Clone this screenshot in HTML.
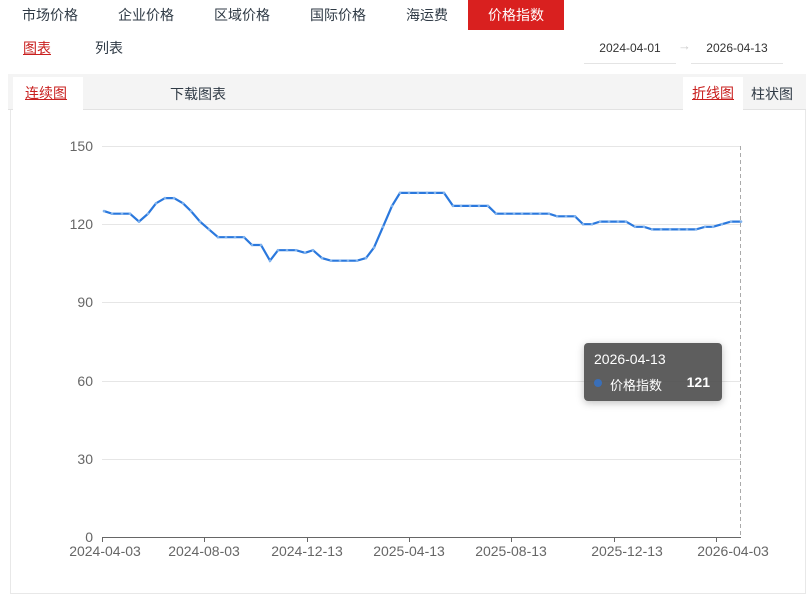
<!DOCTYPE html>
<html><head><meta charset="utf-8"><style>
*{margin:0;padding:0;box-sizing:border-box}
body{width:811px;height:586px;background:#fff;font-family:"Liberation Sans","Noto Sans CJK SC",sans-serif;position:relative;overflow:hidden;color:#333}
.tab{position:absolute;top:0;height:30px;line-height:30px;font-size:14px;color:#2f3a45;text-align:center}
.abs{position:absolute}
</style></head><body>
<div class="tab" style="left:8px;width:84px">市场价格</div>
<div class="tab" style="left:104px;width:84px">企业价格</div>
<div class="tab" style="left:200px;width:84px">区域价格</div>
<div class="tab" style="left:296px;width:84px">国际价格</div>
<div class="tab" style="left:385px;width:84px">海运费</div>
<div class="tab" style="left:468px;width:96px;background:#d9201f;color:#fff">价格指数</div>
<div class="abs" style="left:23px;top:38px;font-size:14px;color:#c9201f;text-decoration:underline">图表</div>
<div class="abs" style="left:95px;top:38px;font-size:14px;color:#2f3a45">列表</div>
<div class="abs" style="left:584px;top:40px;width:92px;height:24px;border-bottom:1px solid #e4e4e4;font-size:12px;text-align:center;line-height:16px">2024-04-01</div>
<div class="abs" style="left:678px;top:38px;font-size:13px;color:#ccc">→</div>
<div class="abs" style="left:691px;top:40px;width:92px;height:24px;border-bottom:1px solid #e4e4e4;font-size:12px;text-align:center;line-height:16px">2026-04-13</div>
<div class="abs" style="left:10px;top:74px;width:796px;height:520px;border:1px solid #e8e8e8"></div>
<div class="abs" style="left:8px;top:74px;width:798px;height:36px;background:#f4f4f4;border-bottom:1px solid #e2e2e2"></div>
<div class="abs" style="left:13px;top:77px;width:70px;height:33px;background:#fff;font-size:14px;line-height:33px;padding-left:12px;color:#c9201f;text-decoration:underline">连续图</div>
<div class="abs" style="left:170px;top:84px;font-size:14px;color:#2f3a45">下载图表</div>
<div class="abs" style="left:683px;top:77px;width:60px;height:33px;background:#fff;font-size:14px;line-height:33px;text-align:center;color:#c9201f;text-decoration:underline">折线图</div>
<div class="abs" style="left:751px;top:84px;font-size:14px;color:#2f3a45">柱状图</div>
<svg class="abs" style="left:0;top:0" width="811" height="586" font-family="Liberation Sans,sans-serif" font-size="14" fill="#666">
<g stroke="#e6e6e6" stroke-width="1">
<line x1="102" x2="741" y1="146.5" y2="146.5"/><line x1="102" x2="741" y1="224.5" y2="224.5"/><line x1="102" x2="741" y1="302.5" y2="302.5"/><line x1="102" x2="741" y1="381.5" y2="381.5"/><line x1="102" x2="741" y1="459.5" y2="459.5"/>
</g>
<line x1="102" x2="741" y1="537.5" y2="537.5" stroke="#666"/>
<g stroke="#666"><line x1="102.5" x2="102.5" y1="537" y2="542"/><line x1="204.5" x2="204.5" y1="537" y2="542"/><line x1="307.5" x2="307.5" y1="537" y2="542"/><line x1="409.5" x2="409.5" y1="537" y2="542"/><line x1="511.5" x2="511.5" y1="537" y2="542"/><line x1="614.5" x2="614.5" y1="537" y2="542"/><line x1="716.5" x2="716.5" y1="537" y2="542"/></g>
<line x1="740.5" x2="740.5" y1="146" y2="537" stroke="#aaa" stroke-dasharray="4,3"/>
<g text-anchor="end"><text x="93" y="151">150</text><text x="93" y="229">120</text><text x="93" y="307">90</text><text x="93" y="386">60</text><text x="93" y="464">30</text><text x="93" y="542">0</text></g>
<g text-anchor="middle"><text x="105" y="556">2024-04-03</text><text x="204" y="556">2024-08-03</text><text x="307" y="556">2024-12-13</text><text x="409" y="556">2025-04-13</text><text x="511" y="556">2025-08-13</text><text x="627" y="556">2025-12-13</text><text x="733" y="556">2026-04-03</text></g>
<polyline id="ln" fill="none" stroke="#2a78dd" stroke-width="2.2"/>
<g id="dots" fill="#7fb2ee"></g>
</svg>
<div class="abs" style="left:584px;top:343px;width:138px;height:58px;background:rgba(80,80,80,.92);border-radius:4px;box-shadow:0 2px 8px rgba(0,0,0,.25);color:#fff">
<div style="position:absolute;left:10px;top:8px;font-size:14px">2026-04-13</div>
<div style="position:absolute;left:10px;top:36px;width:8px;height:8px;border-radius:50%;background:#3a6fb8"></div>
<div style="position:absolute;left:26px;top:32px;font-size:13px">价格指数</div>
<div style="position:absolute;right:12px;top:31px;font-size:14px;font-weight:bold">121</div>
</div>
<script>
var d=[[104,125],[112,124],[122,124],[130,124],[139,121],[148,124],[156,128],[165,130],[174,130],[183,128],[191,125],[200,121],[209,118],[218,115],[226,115],[235,115],[244,115],[252,112],[261,112],[270,106],[278,110],[287,110],[296,110],[305,109],[313,110],[322,107],[331,106],[340,106],[348,106],[357,106],[366,107],[374,111],[383,119],[392,127],[400,132],[409,132],[418,132],[427,132],[435,132],[444,132],[453,127],[461,127],[470,127],[479,127],[488,127],[496,124],[505,124],[514,124],[522,124],[531,124],[540,124],[549,124],[557,123],[566,123],[575,123],[583,120],[592,120],[600,121],[609,121],[618,121],[626,121],[635,119],[644,119],[652,118],[661,118],[670,118],[679,118],[687,118],[696,118],[705,119],[713,119],[722,120],[731,121],[741,121]];
var p=d.map(function(a){return a[0]+','+(537-a[1]*2.607).toFixed(1)}).join(' ');
document.getElementById('ln').setAttribute('points',p);
var g=document.getElementById('dots'),h='';
d.forEach(function(a){h+='<circle cx="'+a[0]+'" cy="'+(537-a[1]*2.607).toFixed(1)+'" r="1.3"/>'});
g.innerHTML=h;
</script>
</body></html>
